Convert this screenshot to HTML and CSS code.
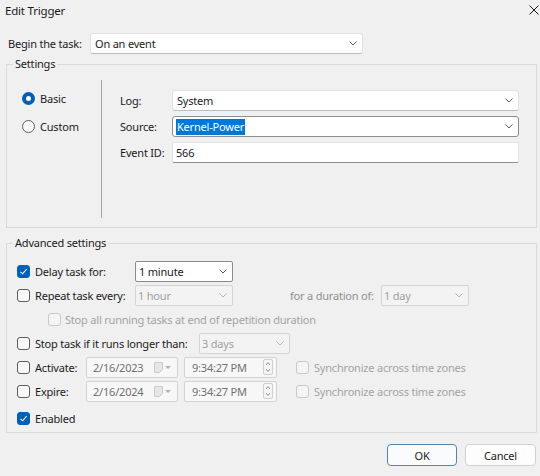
FILE: index.html
```html
<!DOCTYPE html>
<html>
<head>
<meta charset="utf-8">
<title>Edit Trigger</title>
<link rel="stylesheet" href="styles.css">
</head>
<body>
<div class="window">
  <div class="titlebar">
    <span class="title">Edit Trigger</span>
    <svg class="close" width="10" height="10" viewBox="0 0 10 10"><path d="M0.5 0.5L9.5 9.5M9.5 0.5L0.5 9.5" stroke="#1a1a1a" stroke-width="1"/></svg>
  </div>

  <div class="begin-row">
    <span class="begin-label">Begin the task:</span>
    <div class="combo soft begin-combo"><span class="val">On an event</span><svg class="chev" viewBox="0 0 8 5"><path d="M0.5 0.5L4 4L7.5 0.5" fill="none" stroke="#5a5a5a"/></svg></div>
  </div>

  <fieldset class="group settings">
    <legend>Settings</legend>
    <div class="settings-body">
      <div class="radios">
        <div class="radio-row"><span class="radio on"></span><span>Basic</span></div>
        <div class="radio-row"><span class="radio"></span><span>Custom</span></div>
      </div>
      <div class="fields">
        <div class="field-row"><span class="field-label">Log:</span><div class="combo soft grow"><span class="val">System</span><svg class="chev" viewBox="0 0 8 5"><path d="M0.5 0.5L4 4L7.5 0.5" fill="none" stroke="#5a5a5a"/></svg></div></div>
        <div class="field-row"><span class="field-label">Source:</span><div class="combo focus grow"><span class="val"><span class="sel">Kernel-Power</span></span><svg class="chev" viewBox="0 0 8 5"><path d="M0.5 0.5L4 4L7.5 0.5" fill="none" stroke="#5a5a5a"/></svg></div></div>
        <div class="field-row"><span class="field-label">Event ID:</span><div class="textbox grow">566</div></div>
      </div>
    </div>
  </fieldset>

  <fieldset class="group advanced">
    <legend>Advanced settings</legend>
    <div class="adv-body">
      <div class="adv-row">
        <span class="check on"><svg viewBox="0 0 11 11" width="11" height="11"><path d="M2.5 5.8L4.6 7.8L8.6 3.2" fill="none" stroke="#fff" stroke-width="1.1"/></svg></span>
        <span class="lbl w100">Delay task for:</span>
        <div class="combo classic w98"><span class="val">1 minute</span><svg class="chev" viewBox="0 0 8 5"><path d="M0.5 0.5L4 4L7.5 0.5" fill="none" stroke="#5a5a5a"/></svg></div>
      </div>
      <div class="adv-row">
        <span class="check"></span>
        <span class="lbl w100">Repeat task every:</span>
        <div class="combo disabled w98"><span class="val">1 hour</span><svg class="chev" viewBox="0 0 8 5"><path d="M0.5 0.5L4 4L7.5 0.5" fill="none" stroke="#b4b4b4"/></svg></div>
        <span class="dim dur">for a duration of:</span>
        <div class="combo disabled w88"><span class="val">1 day</span><svg class="chev" viewBox="0 0 8 5"><path d="M0.5 0.5L4 4L7.5 0.5" fill="none" stroke="#b4b4b4"/></svg></div>
      </div>
      <div class="adv-row sub">
        <span class="check dis"></span>
        <span class="dim">Stop all running tasks at end of repetition duration</span>
      </div>
      <div class="adv-row">
        <span class="check"></span>
        <span class="lbl w164">Stop task if it runs longer than:</span>
        <div class="combo disabled w90"><span class="val">3 days</span><svg class="chev" viewBox="0 0 8 5"><path d="M0.5 0.5L4 4L7.5 0.5" fill="none" stroke="#b4b4b4"/></svg></div>
      </div>
      <div class="adv-row">
        <span class="check"></span>
        <span class="lbl w51">Activate:</span>
        <div class="picker date"><span>2/16/2023</span><span class="cal"><svg width="9" height="11" viewBox="0 0 9 11"><path d="M0.5 0.5H8.5V7.5L5.5 10.5H0.5Z" fill="#e6e6e6" stroke="#cacaca"/></svg><svg width="6" height="3" viewBox="0 0 6 3"><path d="M0 0H6L3 3Z" fill="#b0b0b0"/></svg></span></div>
        <div class="picker time"><span>9:34:27 PM</span><span class="spin"><svg width="10" height="16" viewBox="0 0 10 16"><rect x="0.5" y="0.5" width="9" height="15" rx="1.5" fill="#f4f4f4" stroke="#d0d0d0"/><path d="M3 6L5 3.5L7 6M3 10L5 12.5L7 10" fill="none" stroke="#9a9a9a"/></svg></span></div>
        <span class="check dis sync"></span>
        <span class="dim">Synchronize across time zones</span>
      </div>
      <div class="adv-row">
        <span class="check"></span>
        <span class="lbl w51">Expire:</span>
        <div class="picker date"><span>2/16/2024</span><span class="cal"><svg width="9" height="11" viewBox="0 0 9 11"><path d="M0.5 0.5H8.5V7.5L5.5 10.5H0.5Z" fill="#e6e6e6" stroke="#cacaca"/></svg><svg width="6" height="3" viewBox="0 0 6 3"><path d="M0 0H6L3 3Z" fill="#b0b0b0"/></svg></span></div>
        <div class="picker time"><span>9:34:27 PM</span><span class="spin"><svg width="10" height="16" viewBox="0 0 10 16"><rect x="0.5" y="0.5" width="9" height="15" rx="1.5" fill="#f4f4f4" stroke="#d0d0d0"/><path d="M3 6L5 3.5L7 6M3 10L5 12.5L7 10" fill="none" stroke="#9a9a9a"/></svg></span></div>
        <span class="check dis sync"></span>
        <span class="dim">Synchronize across time zones</span>
      </div>
      <div class="adv-row enabled">
        <span class="check on"><svg viewBox="0 0 11 11" width="11" height="11"><path d="M2.5 5.8L4.6 7.8L8.6 3.2" fill="none" stroke="#fff" stroke-width="1.1"/></svg></span>
        <span>Enabled</span>
      </div>
    </div>
  </fieldset>

  <div class="buttons">
    <button class="btn default">OK</button>
    <button class="btn">Cancel</button>
  </div>
</div>
</body>
</html>
```
FILE: styles.css
```css
* { box-sizing: border-box; }
html, body { margin: 0; padding: 0; }
body {
  width: 540px;
  height: 476px;
  overflow: hidden;
  background: #f0f0f0;
  font-family: "Noto Sans", "Segoe UI", sans-serif;
  font-size: 11px;
  letter-spacing: -0.2px;
  color: #1b1b1b;
}
.titlebar {
  height: 21px;
  display: flex;
  align-items: center;
  justify-content: space-between;
  padding: 0 1px 0 5px;
}
.title { font-size: 11.5px; }
.close { display: block; margin-top: -1px; }

.begin-row {
  display: flex;
  align-items: center;
  height: 21px;
  margin-top: 12px;
  padding-left: 8px;
}
.begin-label { width: 82px; }
.begin-combo { width: 273px; }

.combo {
  height: 21px;
  display: flex;
  align-items: center;
  justify-content: space-between;
  padding: 0 5px 0 4px;
  background: #fff;
  border: 1px solid #d9d9d9;
  white-space: nowrap;
}
.combo.soft { border-color: #e2e2e2; border-bottom-color: #bcbcbc; border-radius: 3px; }
.combo.focus { border-color: #8e8e8e; border-radius: 3px; padding-left: 3px; }
.combo.classic { border-color: #8a8a8a; border-radius: 2px; padding-left: 3px; }
.combo.disabled { background: #f3f3f3; border-color: #d4d4d4; color: #a0a0a0; padding-left: 2px; border-radius: 2px; }
.chev { width: 8px; height: 5px; flex: none; display: block; }
.grow { flex: 1; }
.w98 { width: 98px; }
.w88 { width: 88px; }
.w90 { width: 91px; }

.sel {
  display: inline-block;
  background: #0078d7;
  color: #fff;
  line-height: 16px;
  padding: 0 1px;
}

.textbox {
  height: 21px;
  display: flex;
  align-items: center;
  padding-left: 3px;
  background: #fff;
  border: 1px solid #e2e2e2;
  border-bottom-color: #8e8e8e;
  border-radius: 2px;
}

.group {
  margin: 0 3px 0 6px;
  padding: 0;
  border: 1px solid #dadada;
  min-width: 0;
}
.group legend {
  margin-left: 6px;
  padding: 0 2px;
  line-height: 16px;
  height: 16px;
}
.settings { margin-top: 2px; }
.settings-body { display: flex; margin-top: 8px; padding-bottom: 9px; }
.radios {
  width: 94px;
  padding: 8px 0 0 15px;
  display: flex;
  flex-direction: column;
  gap: 8px;
}
.radio-row { display: flex; align-items: center; height: 20px; gap: 5px; }
.radio {
  width: 13px;
  height: 13px;
  border-radius: 50%;
  border: 1px solid #5d5d5d;
  background: #f8f8f8;
  flex: none;
}
.radio.on { border: 4px solid #005fb8; background: #fff; }
.fields {
  flex: 1;
  height: 138px;
  border-left: 1px solid #a6a6a6;
  padding: 10px 17px 0 18px;
  display: flex;
  flex-direction: column;
  gap: 5px;
}
.field-row { display: flex; align-items: center; height: 21px; }
.field-label { width: 52px; flex: none; }

.advanced { margin-top: 7px; }
.adv-body { padding: 8px 0 2px 10px; }
.adv-row { display: flex; align-items: center; height: 24px; white-space: nowrap; }
.adv-row.sub { padding-left: 31px; }
.adv-row.sub .check { margin-right: 4px; }
.adv-row.enabled { margin-top: 3px; }
.check {
  width: 13px;
  height: 13px;
  border: 1px solid #5d5d5d;
  border-radius: 3px;
  background: #f8f8f8;
  margin-right: 5px;
  flex: none;
  display: flex;
  align-items: center;
  justify-content: center;
}
.check.on { background: #005fb8; border-color: #005fb8; }
.check.dis { border-color: #c9c9c9; background: #f5f5f5; }
.check.sync { margin-left: 19px; }
.lbl { flex: none; }
.w100 { width: 100px; }
.w164 { width: 164px; }
.w51 { width: 51px; }
.dim { color: #a3a3a3; }
.dur { width: 91px; margin-left: 57px; flex: none; color: #8f8f8f; }

.picker {
  height: 21px;
  display: flex;
  align-items: center;
  justify-content: space-between;
  background: #f7f7f7;
  border: 1px solid #d3d3d3;
  border-radius: 2px;
  color: #707070;
  flex: none;
}
.picker.date { width: 92px; padding: 0 6px 0 6px; }
.picker.time { width: 93px; margin-left: 6px; padding: 0 3px 0 7px; }
.cal { display: flex; align-items: center; gap: 2px; }
.cal svg, .spin svg { display: block; }

.buttons {
  display: flex;
  justify-content: flex-end;
  gap: 8px;
  margin-top: 11px;
  padding-right: 4px;
}
.btn {
  width: 70px;
  height: 22px;
  border: 1px solid #d0d0d0;
  border-radius: 4px;
  background: #fdfdfd;
  font: inherit;
  letter-spacing: inherit;
  color: #1b1b1b;
  padding: 0;
}
.btn + .btn { width: 71px; }
.btn.default { border-color: #4f86b3; background: #f9fbfc; }
```
